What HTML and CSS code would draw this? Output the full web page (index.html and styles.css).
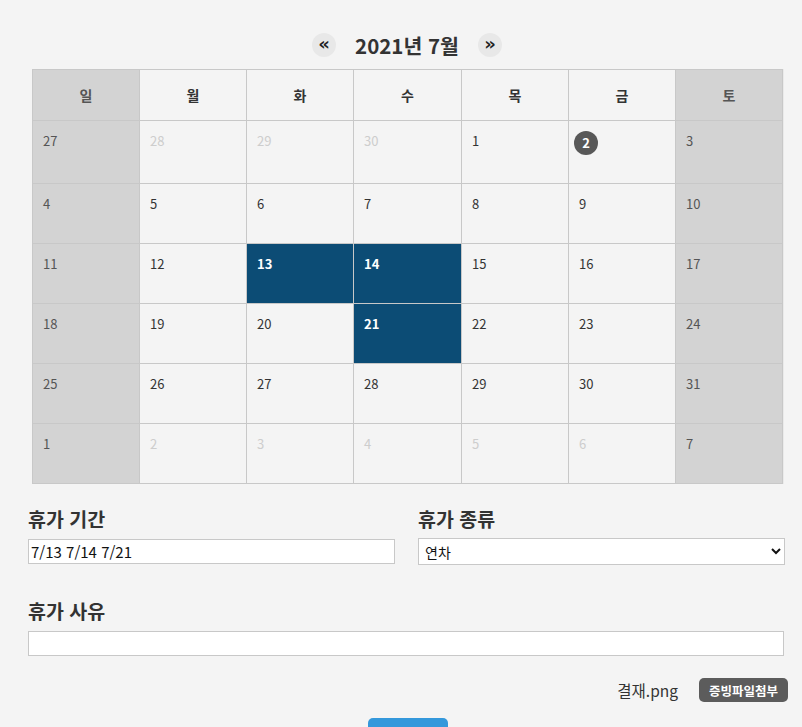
FILE: index.html
```html
<!DOCTYPE html>
<html lang="ko">
<head>
<meta charset="utf-8">
<link rel="stylesheet" href="styles.css">
</head>
<body>
<div class="page">
  <div class="cal-head">
    <button class="nav-btn">«</button>
    <h2 class="cal-title">2021년 7월</h2>
    <button class="nav-btn">»</button>
  </div>
  <div class="calendar">
    <div class="cell head weekend">일</div>
    <div class="cell head">월</div>
    <div class="cell head">화</div>
    <div class="cell head">수</div>
    <div class="cell head">목</div>
    <div class="cell head">금</div>
    <div class="cell head weekend">토</div>

    <div class="cell weekend">27</div>
    <div class="cell other">28</div>
    <div class="cell other">29</div>
    <div class="cell other">30</div>
    <div class="cell">1</div>
    <div class="cell"><span class="today">2</span></div>
    <div class="cell weekend">3</div>

    <div class="cell weekend">4</div>
    <div class="cell">5</div>
    <div class="cell">6</div>
    <div class="cell">7</div>
    <div class="cell">8</div>
    <div class="cell">9</div>
    <div class="cell weekend">10</div>

    <div class="cell weekend">11</div>
    <div class="cell">12</div>
    <div class="cell selected">13</div>
    <div class="cell selected">14</div>
    <div class="cell">15</div>
    <div class="cell">16</div>
    <div class="cell weekend">17</div>

    <div class="cell weekend">18</div>
    <div class="cell">19</div>
    <div class="cell">20</div>
    <div class="cell selected">21</div>
    <div class="cell">22</div>
    <div class="cell">23</div>
    <div class="cell weekend">24</div>

    <div class="cell weekend">25</div>
    <div class="cell">26</div>
    <div class="cell">27</div>
    <div class="cell">28</div>
    <div class="cell">29</div>
    <div class="cell">30</div>
    <div class="cell weekend">31</div>

    <div class="cell weekend">1</div>
    <div class="cell other">2</div>
    <div class="cell other">3</div>
    <div class="cell other">4</div>
    <div class="cell other">5</div>
    <div class="cell other">6</div>
    <div class="cell weekend">7</div>
  </div>

  <div class="form-row">
    <div class="field">
      <label class="label">휴가 기간</label>
      <input class="text-input" type="text" value="7/13 7/14 7/21">
    </div>
    <div class="field">
      <label class="label">휴가 종류</label>
      <select class="select">
        <option>연차</option>
      </select>
    </div>
  </div>

  <div class="field reason">
    <label class="label">휴가 사유</label>
    <input class="text-input" type="text" value="">
  </div>

  <div class="file-row">
    <span class="file-name">결재.png</span>
    <button class="file-btn">증빙파일첨부</button>
  </div>

  <div class="submit-row">
    <button class="submit-btn">신청</button>
  </div>
</div>
</body>
</html>
```

FILE: styles.css
```css
* { box-sizing: border-box; }
html, body {
  margin: 0;
  padding: 0;
  background: #f4f4f4;
  font-family: "Noto Sans CJK KR", "Noto Sans", sans-serif;
  color: #333;
  overflow: hidden;
}
.page {
  width: 802px;
  padding: 0 17px 40px 28px;
}
.cal-head {
  display: flex;
  justify-content: center;
  align-items: center;
  gap: 19px;
  margin: 33px 0 12px 0;
  padding-left: 1px;
  height: 24px;
}
.nav-btn {
  width: 24px;
  height: 24px;
  border-radius: 50%;
  border: none;
  background: #e8e8e8;
  color: #222;
  font-family: "DejaVu Sans", sans-serif;
  font-weight: bold;
  font-size: 18px;
  line-height: 22px;
  padding: 0 0 2px 0;
  text-align: center;
}
.cal-title {
  margin: 0;
  font-size: 20.5px;
  font-weight: 700;
  line-height: 24px;
  color: #333;
}
.calendar {
  margin-left: 4px;
  width: 752px;
  display: grid;
  grid-template-columns: 106px 106px 106px 107px 106px 106px 106px;
  grid-template-rows: 50px 62px repeat(5, 59px);
  gap: 1px;
  padding: 1px 2px 1px 1px;
  background: #c8c8c8;
  border-right: 1px solid #eaeaea;
}
.cell {
  background: #f4f4f4;
  padding: 10px 10px;
  font-size: 13px;
  line-height: 20px;
  color: #333;
}
.cell.head {
  display: flex;
  align-items: center;
  justify-content: center;
  font-weight: 700;
  font-size: 14px;
  padding: 0;
  color: #333;
}
.cell.weekend {
  background: #d3d3d3;
  color: #555;
}
.cell.head.weekend {
  background: #d3d3d3;
  color: #555;
}
.cell.other {
  color: #cdcdcd;
}
.cell.selected {
  background: #0c4c75;
  color: #fff;
  font-weight: 700;
}
.today {
  display: inline-flex;
  align-items: center;
  justify-content: center;
  width: 24px;
  height: 24px;
  margin-left: -5px;
  border-radius: 50%;
  background: #585858;
  color: #fff;
  font-weight: 700;
  font-size: 13px;
}
.form-row {
  display: flex;
  gap: 23px;
  margin-top: 22px;
}
.field {
  display: flex;
  flex-direction: column;
  flex: 1;
}
.label {
  font-size: 19.5px;
  font-weight: 700;
  line-height: 26px;
  color: #333;
  margin-bottom: 7px;
}
.text-input {
  height: 25px;
  border: 1px solid #c8c8c8;
  background: #fff;
  font-family: "Noto Sans CJK KR", "Noto Sans", sans-serif;
  font-size: 15px;
  color: #111;
  padding: 0 2px;
  outline: none;
}
.select {
  height: 27px;
  margin-top: -1px;
  border: 1px solid #c8c8c8;
  background: #fff;
  font-family: "Noto Sans CJK KR", "Noto Sans", sans-serif;
  font-size: 14px;
  color: #111;
  padding: 0 2px;
}
.reason {
  margin-top: 33px;
}
.reason .text-input {
  width: 756px;
}
.file-row {
  display: flex;
  justify-content: flex-end;
  align-items: center;
  gap: 21px;
  margin: 22px -3px 0 0;
  height: 24px;
}
.file-name {
  font-size: 15.5px;
  color: #333;
}
.file-btn {
  height: 24px;
  padding: 0 10px;
  border: none;
  border-radius: 5px;
  background: #5c5c5c;
  color: #fff;
  font-family: "Noto Sans CJK KR", sans-serif;
  font-weight: 700;
  font-size: 12.5px;
}
.submit-row {
  display: flex;
  justify-content: center;
  margin-top: 16px;
  padding-left: 2px;
}
.submit-btn {
  width: 80px;
  height: 44px;
  border: none;
  border-radius: 5px;
  background: #3498db;
  color: #fff;
  font-family: "Noto Sans CJK KR", sans-serif;
  font-size: 14px;
  padding-top: 14px;
}
```
